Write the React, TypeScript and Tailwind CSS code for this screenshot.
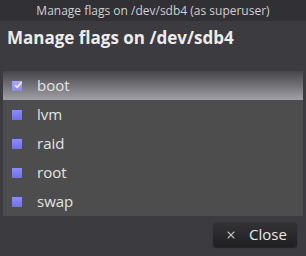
import { X } from 'lucide-react';

const flags = [
    { name: 'boot', checked: true },
    { name: 'lvm', checked: false },
    { name: 'raid', checked: false },
    { name: 'root', checked: false },
    { name: 'swap', checked: false },
];

function Box({ checked }: { checked: boolean }) {
    return (
        <span
            className={`relative flex h-[10px] w-[10px] items-center justify-center ${
                checked ? 'bg-gradient-to-b from-[#a9a9f6] to-[#8a8aee]' : 'bg-gradient-to-b from-[#8c8cff] to-[#6e6ef0]'
            }`}
        >
            {checked && (
                <svg viewBox="0 0 10 10" className="absolute -right-[1px] -top-[1px] h-[10px] w-[10px]">
                    <path d="M2 5.2 L4.2 7.4 L8.6 2.2" fill="none" stroke="#f4f4ff" strokeWidth="1.6" />
                </svg>
            )}
        </span>
    );
}

export default function App() {
    return (
        <div className="flex h-[256px] w-[306px] flex-col overflow-hidden bg-[#3c3b40] font-['Open_Sans',sans-serif]">
            <div className="flex h-[21px] shrink-0 items-center justify-center bg-[#313035] text-[12px] text-[#cfcfd2]">
                Manage flags on /dev/sdb4 (as superuser)
            </div>
            <h1 className="px-[7px] pt-[5px] text-[17px] font-bold leading-[24px] text-[#ececec]">
                Manage flags on /dev/sdb4
            </h1>
            <div className="mx-[3px] mt-[21px] flex flex-col bg-[#4d4d4d]">
                {flags.map((f) => (
                    <div
                        key={f.name}
                        className={`flex h-[29px] items-center gap-[15px] pl-[9px] text-[15px] text-[#e4e4e4] ${
                            f.checked ? 'bg-gradient-to-b from-[#46464a] to-[#a2a1a8]' : ''
                        }`}
                    >
                        <Box checked={f.checked} />
                        <span>{f.name}</span>
                    </div>
                ))}
            </div>
            <div className="flex justify-end pr-[9px] pt-[6px]">
                <button className="flex h-[25px] w-[84px] items-center justify-center gap-[12px] rounded-[3px] bg-gradient-to-b from-[#333336] to-[#202022] pl-[2px] text-[15px] text-[#e8e8e8] shadow-[0_1px_1px_rgba(0,0,0,0.4)]">
                    <X className="h-[12px] w-[12px] text-[#bdbdbd]" strokeWidth={2.2} />
                    Close
                </button>
            </div>
        </div>
    );
}
